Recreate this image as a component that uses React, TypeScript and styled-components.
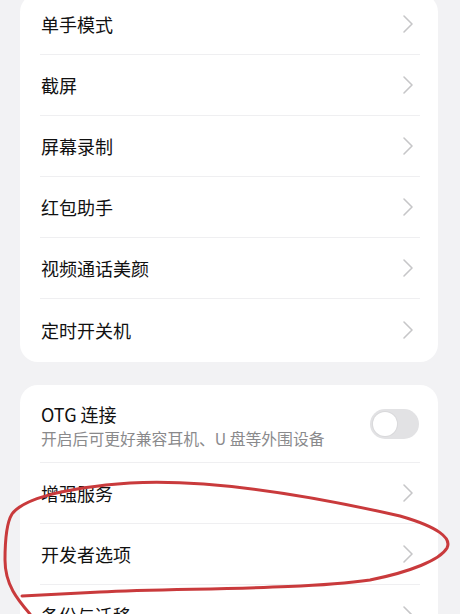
import React from 'react';
import styled, { createGlobalStyle } from 'styled-components';

const GlobalStyle = createGlobalStyle`
  html, body {
    margin: 0;
    padding: 0;
    background: #f2f2f4;
    overflow: hidden;
  }
  body {
    font-family: "Noto Sans CJK SC", "Noto Sans", sans-serif;
  }
`;

const Page = styled.div`
  position: relative;
  width: 460px;
  height: 614px;
  overflow: hidden;
  padding: 0 22px 0 20px;
  box-sizing: border-box;
`;

const Card = styled.div<{ $offset?: number }>`
  background: #ffffff;
  border-radius: 18px;
  margin-top: ${p => p.$offset ?? 0}px;
  padding-bottom: 2px;
`;

const Row = styled.div<{ $tall?: boolean; $last?: boolean }>`
  display: flex;
  align-items: center;
  justify-content: space-between;
  height: ${p => (p.$tall ? 78 : 61)}px;
  padding-top: ${p => (p.$tall ? 4 : 0)}px;
  margin: 0 18px 0 20px;
  box-sizing: border-box;
  border-bottom: ${p => (p.$last ? 'none' : '1px solid #efeff1')};
`;

const TextBlock = styled.div`
  display: flex;
  flex-direction: column;
  padding-left: 1px;
`;

const Title = styled.div`
  font-size: 18px;
  color: #111111;
  line-height: 24px;
`;

const Subtitle = styled.div`
  font-size: 15.8px;
  color: #8a8a8c;
  line-height: 20px;
  margin-top: 3px;
`;

const Chevron = styled.svg`
  width: 12px;
  height: 20px;
  margin-right: 6px;
  flex-shrink: 0;
`;

const Gap = styled.div`
  height: 23px;
`;

const Toggle = styled.div`
  width: 49px;
  height: 30px;
  border-radius: 15px;
  background: #e2e2e4;
  display: flex;
  align-items: center;
  padding: 0 3px;
  box-sizing: border-box;
  margin-right: 1px;
  margin-bottom: 4px;
`;

const Knob = styled.div`
  width: 24px;
  height: 24px;
  border-radius: 50%;
  background: #ffffff;
  box-shadow: 0 0 0 1px #d9d9db;
`;

const Annotation = styled.svg`
  position: absolute;
  left: 0;
  top: 0;
  width: 460px;
  height: 614px;
  pointer-events: none;
`;

const Arrow = () => (
  <Chevron viewBox="0 0 12 20">
    <path d="M2 2 L10 10 L2 18" fill="none" stroke="#c6c6c8" strokeWidth="1.6" strokeLinecap="round" strokeLinejoin="round" />
  </Chevron>
);

const first = ['单手模式', '截屏', '屏幕录制', '红包助手', '视频通话美颜', '定时开关机'];
const second = ['增强服务', '开发者选项', '备份与迁移'];

const App: React.FC = () => {
  return (
    <>
      <GlobalStyle />
      <Page>
        <Card $offset={-6}>
          {first.map((t, i) => (
            <Row key={t} $last={i === first.length - 1}>
              <TextBlock>
                <Title>{t}</Title>
              </TextBlock>
              <Arrow />
            </Row>
          ))}
        </Card>
        <Gap />
        <Card>
          <Row $tall>
            <TextBlock>
              <Title>OTG 连接</Title>
              <Subtitle>开启后可更好兼容耳机、U 盘等外围设备</Subtitle>
            </TextBlock>
            <Toggle>
              <Knob />
            </Toggle>
          </Row>
          {second.map(t => (
            <Row key={t}>
              <TextBlock>
                <Title>{t}</Title>
              </TextBlock>
              <Arrow />
            </Row>
          ))}
        </Card>
        <Annotation viewBox="0 0 460 614">
          <path
            d="M30 614 C18 600 5 585 5 560 C5 535 7 522 12 514 C22 500 60 488 130 483 C220 478 330 500 400 516 C438 527 452 538 447 548 C440 560 410 572 370 580 C300 590 180 588 100 592 C60 594 38 595 22 596"
            fill="none"
            stroke="#c93a3c"
            strokeWidth="3"
            strokeLinecap="round"
            strokeLinejoin="round"
          />
        </Annotation>
      </Page>
    </>
  );
};

export default App;
